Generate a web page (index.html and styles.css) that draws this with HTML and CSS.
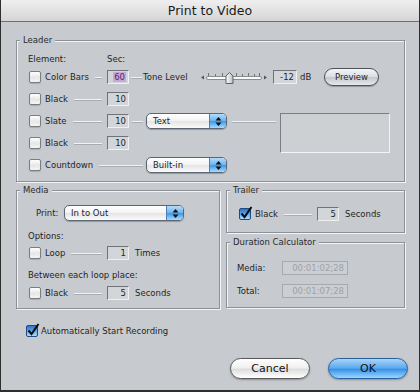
FILE: index.html
```html
<!DOCTYPE html>
<html lang="en">
  <head>
    <meta charset="UTF-8" />
    <meta name="viewport" content="width=device-width, initial-scale=1.0" />
    <title>Print to Video</title>
    <link rel="stylesheet" href="styles.css">
  </head>
  <body>
    <div class="window">
      <div class="titlebar">Print to Video</div>
      <div class="dialog">
        <fieldset class="group leader">
          <legend>Leader</legend>
          <div class="leader-grid">
            <div class="hdr">Element:</div>
            <div class="hdr">Sec:</div>

            <div class="item"><span class="cb"></span><span class="lbl">Color Bars</span><span class="wire"></span></div>
            <div class="field"><span class="sel">60</span></div>
            <div class="tone">
              <span class="wire tone-wire"></span>
              <span class="tone-lbl">Tone Level</span>
              <svg class="slider" width="70" height="16" viewBox="0 0 70 16">
                <defs>
                  <linearGradient id="thumbg" x1="0" y1="0" x2="1" y2="0">
                    <stop offset="0" stop-color="#ffffff" />
                    <stop offset="1" stop-color="#b9bcbf" />
                  </linearGradient>
                </defs>
                <polygon points="2,8.5 5,6.5 5,10.5" fill="#555" />
                <polygon points="68,8.5 65,6.5 65,10.5" fill="#555" />
                <g stroke="#6e7276" stroke-width="1">
                  <line x1="9.5" y1="4" x2="9.5" y2="7" />
                  <line x1="16.5" y1="5" x2="16.5" y2="7" />
                  <line x1="23.5" y1="4" x2="23.5" y2="7" />
                  <line x1="37.5" y1="4" x2="37.5" y2="7" />
                  <line x1="43.5" y1="5" x2="43.5" y2="7" />
                  <line x1="49.5" y1="4" x2="49.5" y2="7" />
                  <line x1="55.5" y1="5" x2="55.5" y2="7" />
                  <line x1="60.5" y1="4" x2="60.5" y2="7" />
                </g>
                <rect x="7.5" y="7.5" width="55" height="3" rx="1.5" fill="#fafafa" stroke="#8a8e92" />
                <path d="M27 14.5 V7 L30.5 3.5 L34 7 V14.5 Z" fill="url(#thumbg)" stroke="#5d6165" />
              </svg>
              <div class="field db">-12</div>
              <span class="unit">dB</span>
              <button class="preview">Preview</button>
            </div>

            <div class="item"><span class="cb"></span><span class="lbl">Black</span><span class="wire"></span></div>
            <div class="field">10</div>

            <div class="item"><span class="cb"></span><span class="lbl">Slate</span><span class="wire"></span></div>
            <div class="field">10</div>
            <span class="wire link"></span>
            <div class="popup">
              <span class="val">Text</span>
              <span class="arr"><svg width="7" height="11" viewBox="0 0 7 11"><polygon points="3.5,1 6.5,4.5 0.5,4.5" fill="#111" /><polygon points="0.5,6.5 6.5,6.5 3.5,10" fill="#111" /></svg></span>
            </div>
            <span class="wire link-long"></span>
            <div class="slate-box"></div>

            <div class="item"><span class="cb"></span><span class="lbl">Black</span><span class="wire"></span></div>
            <div class="field">10</div>

            <div class="item countdown"><span class="cb"></span><span class="lbl">Countdown</span><span class="wire"></span></div>
            <div class="popup">
              <span class="val">Built-in</span>
              <span class="arr"><svg width="7" height="11" viewBox="0 0 7 11"><polygon points="3.5,1 6.5,4.5 0.5,4.5" fill="#111" /><polygon points="0.5,6.5 6.5,6.5 3.5,10" fill="#111" /></svg></span>
            </div>
          </div>
        </fieldset>

        <div class="lower">
          <fieldset class="group media">
            <legend>Media</legend>
            <div class="print-row">
              <span class="print-lbl">Print:</span>
              <div class="popup wide">
                <span class="val">In to Out</span>
                <span class="arr"><svg width="7" height="11" viewBox="0 0 7 11"><polygon points="3.5,1 6.5,4.5 0.5,4.5" fill="#111" /><polygon points="0.5,6.5 6.5,6.5 3.5,10" fill="#111" /></svg></span>
              </div>
            </div>
            <div class="note">Options:</div>
            <div class="row loop">
              <div class="item"><span class="cb"></span><span class="lbl">Loop</span><span class="wire"></span></div>
              <div class="field">1</div>
              <span class="unit-r">Times</span>
            </div>
            <div class="note between">Between each loop place:</div>
            <div class="row black-row">
              <div class="item"><span class="cb"></span><span class="lbl">Black</span><span class="wire"></span></div>
              <div class="field">5</div>
              <span class="unit-r">Seconds</span>
            </div>
          </fieldset>

          <div class="side">
            <fieldset class="group trailer">
              <legend>Trailer</legend>
              <div class="row">
                <div class="item">
                  <svg class="cbx" width="14" height="14" viewBox="0 0 14 14">
                    <defs>
                      <linearGradient id="cbg1" x1="0" y1="0" x2="0" y2="1">
                        <stop offset="0" stop-color="#2c6cc0" />
                        <stop offset="0.5" stop-color="#5aa6ec" />
                        <stop offset="1" stop-color="#b8e2fc" />
                      </linearGradient>
                    </defs>
                    <rect x="0.5" y="2.5" width="11" height="11" rx="1.5" fill="url(#cbg1)" stroke="#1f4a80" />
                    <path d="M2.5 7.5 L5.5 11 L12.5 1" fill="none" stroke="#0b0b0b" stroke-width="2" />
                  </svg>
                  <span class="lbl">Black</span><span class="wire"></span>
                </div>
                <div class="field">5</div>
                <span class="unit-r">Seconds</span>
              </div>
            </fieldset>

            <fieldset class="group duration">
              <legend>Duration Calculator</legend>
              <div class="drow"><span class="dlbl">Media:</span><span class="dfield">00:01:02;28</span></div>
              <div class="drow"><span class="dlbl">Total:</span><span class="dfield">00:01:07;28</span></div>
            </fieldset>
          </div>
        </div>

        <div class="auto">
          <svg class="cbx" width="14" height="14" viewBox="0 0 14 14">
            <defs>
              <linearGradient id="cbg2" x1="0" y1="0" x2="0" y2="1">
                <stop offset="0" stop-color="#2c6cc0" />
                <stop offset="0.5" stop-color="#5aa6ec" />
                <stop offset="1" stop-color="#b8e2fc" />
              </linearGradient>
            </defs>
            <rect x="0.5" y="2.5" width="11" height="11" rx="1.5" fill="url(#cbg2)" stroke="#1f4a80" />
            <path d="M2.5 7.5 L5.5 11 L12.5 1" fill="none" stroke="#0b0b0b" stroke-width="2" />
          </svg>
          <span>Automatically Start Recording</span>
        </div>

        <div class="buttons">
          <button class="btn cancel">Cancel</button>
          <button class="btn ok">OK</button>
        </div>
      </div>
    </div>
  </body>
</html>
```

FILE: styles.css
```css
html,
body {
  margin: 0;
}
body {
  background: #c7cbcf;
  font-family: "DejaVu Sans", sans-serif;
  font-size: 8.5px;
  color: #1f1f1f;
}
.window {
  width: 420px;
  height: 392px;
  box-sizing: border-box;
  border: 1px solid #2e2e2e;
  border-top: none;
  border-bottom-width: 2px;
  display: flex;
  flex-direction: column;
  background: #c7cbcf;
}
.titlebar {
  height: 21px;
  line-height: 21px;
  border-bottom: 1px solid #6e6e6e;
  background: linear-gradient(#efefef, #d5d5d5);
  text-align: center;
  font-size: 12.5px;
  color: #1a1a1a;
}
.dialog {
  flex: 1;
  padding: 12px 14px 0 15px;
}

/* group boxes */
.group {
  margin: 0;
  min-width: 0;
  border: 1px solid #8d9196;
  box-shadow: inset 1px 1px 0 #f3f4f5, 1px 1px 0 #f3f4f5;
}
.group legend {
  margin-left: -8px;
  padding: 0 3px;
  line-height: 12px;
  background: #c7cbcf;
  color: #2a2a2a;
}
.leader {
  padding: 7px 13px 5px 11px;
}
.leader-grid {
  display: grid;
  grid-template-columns: 79px 22px 17px 81px 53px 110px;
  grid-template-rows: 13px repeat(5, 22px);
  align-items: center;
}
.hdr {
  line-height: 12px;
  align-self: start;
}

/* rows with checkbox + label + connector */
.item {
  grid-column: 1;
  width: 79px;
  display: flex;
  align-items: center;
}
.item.countdown {
  grid-column: 1 / 4;
  width: auto;
}
.cb {
  width: 12px;
  height: 12px;
  box-sizing: border-box;
  margin-left: 1px;
  border: 1px solid #7a7d80;
  border-radius: 2px;
  background: linear-gradient(#ffffff, #e6e6e6 55%, #f6f6f6);
  box-shadow: 0 1px 1px rgba(0, 0, 0, 0.15);
  flex-shrink: 0;
}
.cbx {
  display: block;
  margin-left: 1px;
  margin-top: -3px;
  flex-shrink: 0;
}
.lbl {
  margin-left: 4px;
  white-space: nowrap;
}
.cbx + .lbl {
  margin-left: 2px;
}
.wire {
  flex: 1;
  height: 1px;
  margin: 0 5px 0 6px;
  background: #f1f2f3;
  box-shadow: 0 1px 0 #a9adb1;
}
.countdown .wire {
  margin-right: 3px;
}
.wire.link {
  margin: 0 3px;
}
.wire.link-long {
  margin: 0 4px 0 5px;
}

/* text fields */
.field {
  width: 22px;
  height: 14px;
  box-sizing: border-box;
  border: 1px solid;
  border-color: #6f7377 #eef0f2 #eef0f2 #6f7377;
  background: #d3d6d9;
  text-align: right;
  padding-right: 2px;
  line-height: 12px;
  flex-shrink: 0;
}
.sel {
  background: #c9a7dc;
  color: #4b2a6a;
  padding: 0 1px;
}

/* tone level row */
.tone {
  grid-column: 3 / -1;
  display: flex;
  align-items: center;
}
.tone-wire {
  flex: none;
  width: 11px;
  margin: 0 1px 0 2px;
}
.tone-lbl {
  width: 56px;
  white-space: nowrap;
}
.slider {
  display: block;
}
.field.db {
  width: 24px;
  margin-left: 4px;
}
.unit {
  width: 24px;
  margin-left: 3px;
}
.preview {
  width: 55px;
  height: 18px;
  padding: 0;
  border: 1px solid #4f5357;
  border-radius: 9px;
  background: linear-gradient(#f4f5f7, #dcdfe2 48%, #c5c8cc 52%, #e6e8eb);
  box-shadow: 0 1px 1px rgba(0, 0, 0, 0.25);
  font-family: inherit;
  font-size: 8.5px;
  color: #1f1f1f;
}

/* popup menus */
.popup {
  height: 16px;
  box-sizing: border-box;
  display: flex;
  border: 1px solid #5c6672;
  border-radius: 5px;
  background: linear-gradient(#ffffff, #f3f3f3 48%, #e4e4e4 52%, #fbfbfb);
  box-shadow: 0 1px 1px rgba(0, 0, 0, 0.25);
  overflow: hidden;
}
.popup .val {
  flex: 1;
  padding-left: 6px;
  line-height: 14px;
}
.popup .arr {
  width: 16px;
  display: flex;
  align-items: center;
  justify-content: center;
  border-left: 1px solid #4b7fb6;
  background: linear-gradient(#b4dcfa, #6cb4f2 48%, #3f95e6 52%, #a6dcfd);
}
.popup .arr svg {
  display: block;
}
.popup.wide {
  width: 120px;
}
.slate-box {
  grid-row: span 2;
  align-self: start;
  margin-top: 3px;
  height: 40px;
  box-sizing: border-box;
  border: 1px solid;
  border-color: #7a7e82 #f4f5f6 #f4f5f6 #7a7e82;
  background: #cdd0d3;
}

/* media / trailer / duration */
.lower {
  display: flex;
  gap: 6px;
  margin-top: 2px;
}
.media {
  width: 204px;
  box-sizing: border-box;
  padding: 9px 8px 5px 11px;
}
.side {
  flex: 1;
  display: flex;
  flex-direction: column;
}
.print-row {
  display: flex;
  align-items: center;
  height: 16px;
}
.print-lbl {
  width: 28px;
  margin-left: 8px;
}
.note {
  height: 12px;
  line-height: 12px;
  margin-top: 9px;
}
.note.between {
  margin-top: 6px;
}
.row {
  display: flex;
  align-items: center;
  height: 20px;
}
.row.loop {
  margin-top: 1px;
}
.row.black-row {
  margin-top: 2px;
}
.unit-r {
  margin-left: 6px;
}
.trailer {
  padding: 8px 8px 8px 11px;
}
.duration {
  margin-top: 3px;
  padding: 13px 8px 9px 10px;
}
.duration legend {
  margin-left: -7px;
}
.drow {
  display: flex;
  align-items: center;
  height: 14px;
}
.drow + .drow {
  margin-top: 9px;
}
.dlbl {
  width: 45px;
}
.dfield {
  width: 66px;
  height: 14px;
  box-sizing: border-box;
  border: 1px solid #a6aaae;
  background: #cbced2;
  color: #9ea2a6;
  text-align: right;
  padding-right: 3px;
  line-height: 12px;
}

/* bottom */
.auto {
  display: flex;
  align-items: center;
  gap: 1px;
  height: 14px;
  margin: 15px 0 0 10px;
}
.auto .cbx {
  margin-left: 0;
}
.buttons {
  display: flex;
  justify-content: flex-end;
  gap: 18px;
  margin: 20px -3px 0 0;
}
.btn {
  width: 80px;
  height: 21px;
  padding: 0;
  border-radius: 11px;
  font-family: inherit;
  font-size: 11px;
  color: #111;
  box-shadow: 0 1px 2px rgba(0, 0, 0, 0.3);
}
.btn.cancel {
  border: 1px solid #5a5a5a;
  background: linear-gradient(#ffffff, #f0f0f0 45%, #dedede 55%, #ffffff);
}
.btn.ok {
  border: 1px solid #2a5f9e;
  background: linear-gradient(#a8d4f8, #5fadf0 45%, #3a93e8 55%, #9ad8fd);
}
```
